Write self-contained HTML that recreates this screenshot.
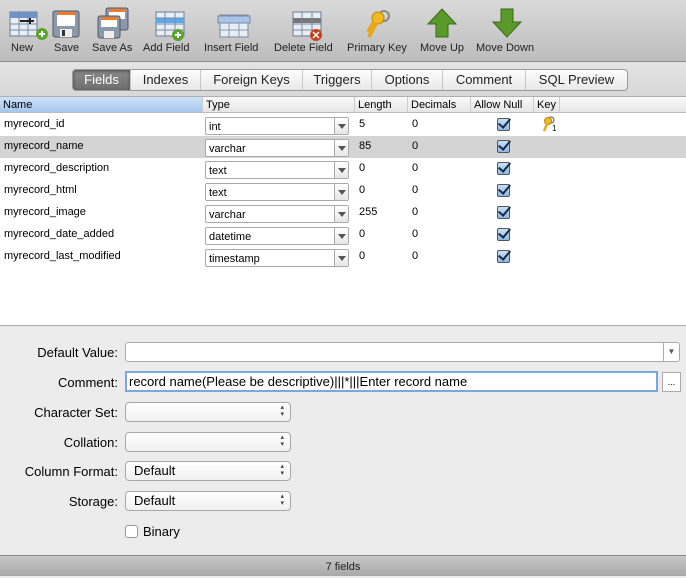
<!DOCTYPE html>
<html><head><style>
*{margin:0;padding:0;box-sizing:border-box}
body{width:686px;height:576px;overflow:hidden;font-family:"Liberation Sans",sans-serif;background:#ececec;position:relative;color:#000}
.abs{position:absolute}
#tb{left:0;top:0;width:686px;height:62px;background:linear-gradient(#dadada,#bdbdbd);border-bottom:1px solid #8a8a8a}
.tl{position:absolute;top:42px;font-size:11px;color:#222;white-space:nowrap}
#tabbar{left:0;top:62px;width:686px;height:35px;background:linear-gradient(#e4e4e4,#d8d8d8);border-bottom:1px solid #b0b0b0}
#seg{left:72px;top:69px;height:22px;width:556px;border:1px solid #9a9a9a;border-radius:4px;background:linear-gradient(#fdfdfd,#e8e8e8);display:flex;font-size:13px;overflow:hidden}
#seg div{height:20px;line-height:20px;text-align:center;border-right:1px solid #c8c8c8;color:#222}
#seg div.on{background:linear-gradient(#8a8a8a,#6e6e6e);color:#fff;box-shadow:inset 0 1px 3px #444}
#tbl{left:0;top:97px;width:686px;height:229px;background:#fff;border-bottom:1px solid #aaa}
.hd{position:absolute;top:0;height:16px;font-size:11px;line-height:16px;padding-left:3px;border-right:1px solid #ccc;background:linear-gradient(#fafafa,#e6e6e6);border-bottom:1px solid #bbb}
.row{position:absolute;left:0;width:686px;height:22px;font-size:11px}
.row span{position:absolute;top:4px}
.sel{position:absolute;left:205px;top:3px;width:144px;height:18px;border:1px solid #aaa;background:#fff;border-radius:2px}
.sel i{font-style:normal;position:absolute;left:3px;top:3px;font-size:11px}
.sel b{position:absolute;right:0;top:0;width:14px;height:16px;border-left:1px solid #aaa;background:linear-gradient(#fff,#e6e6e6)}
.sel b:after{content:"";position:absolute;left:3px;top:6px;border:4px solid transparent;border-top:5px solid #555}
.cb{position:absolute;left:497px;top:4px;width:13px;height:13px;border:1px solid #555;border-radius:2px;background:linear-gradient(#c8e0f8,#8cb8e8)}
.cb:after{content:"";position:absolute;left:3px;top:-3px;width:5px;height:10px;border:solid #1a2a44;border-width:0 2px 2px 0;transform:rotate(40deg)}
.lbl{position:absolute;right:568px;font-size:13px;text-align:right;white-space:nowrap}
.inp{position:absolute;background:#fff;border:1px solid #aaa}
.pop{position:absolute;left:125px;width:166px;height:20px;border:1px solid #a8a8a8;border-radius:4px;background:linear-gradient(#fff,#f0f0f0);font-size:13px;padding-left:8px;line-height:18px}
.pop:after{content:"▴\A▾";white-space:pre;position:absolute;right:6px;top:1px;font-size:7px;line-height:7px;color:#444}
#status{left:0;top:555px;width:686px;height:21px;background:linear-gradient(#c8c8c8,#a8a8a8);border-top:1px solid #888;font-size:11px;text-align:center;line-height:22px;color:#222}
</style></head><body>
<div id="tb" class="abs">
<svg class="abs" style="left:0;top:0" width="686" height="42">
<g transform="translate(10,12)"><rect width="27" height="24" fill="#e8eef6" stroke="#6a7a90"/><rect width="27" height="6" fill="#6f93c8"/><path d="M0 12H27M0 18H27M9 0V24M18 0V24" stroke="#7a8aa0"/><path d="M10 9H24M20 6V12" stroke="#222" stroke-width="2"/><circle cx="32" cy="22" r="6" fill="#5aa62a"/><path d="M29 22H35M32 19V25" stroke="#fff" stroke-width="2"/></g>
<g transform="translate(53,11)"><rect width="26" height="26" rx="2" fill="#8a9aaa" stroke="#556"/><rect x="4" y="1" width="18" height="14" fill="#fff"/><rect x="4" y="1" width="18" height="3" fill="#f07a2a"/><rect x="7" y="18" width="12" height="8" fill="#eee"/><rect x="9" y="19" width="3" height="6" fill="#333"/></g>
<g transform="translate(98,8)"><rect x="8" y="0" width="22" height="22" rx="2" fill="#8a9aaa" stroke="#556"/><rect x="11" y="1" width="16" height="10" fill="#fff"/><rect x="11" y="1" width="16" height="3" fill="#f07a2a"/><rect x="0" y="8" width="22" height="22" rx="2" fill="#8a9aaa" stroke="#556"/><rect x="3" y="9" width="16" height="10" fill="#fff"/><rect x="3" y="9" width="16" height="3" fill="#f07a2a"/><rect x="6" y="23" width="10" height="7" fill="#eee"/></g>
<g transform="translate(156,12)"><rect width="28" height="24" fill="#e8eef6" stroke="#6a7a90"/><rect y="6" width="28" height="5" fill="#5aaaf0"/><path d="M0 6H28M0 12H28M0 18H28M9 0V24M19 0V24" stroke="#7a8aa0"/><circle cx="22" cy="23" r="6" fill="#5aa62a"/><path d="M19 23H25M22 20V26" stroke="#fff" stroke-width="2"/></g>
<g transform="translate(218,12)"><rect x="2" y="3" width="28" height="22" fill="#e8eef6" stroke="#7a8aa0"/><path d="M2 11H30M2 18H30M11 3V25M21 3V25" stroke="#8a9ab0"/><rect x="0" y="4" width="32" height="7" fill="#a8c4e8" stroke="#7a8aa0"/></g>
<g transform="translate(293,12)"><rect width="28" height="24" fill="#e8eef6" stroke="#6a7a90"/><rect y="6" width="28" height="5" fill="#777"/><path d="M0 12H28M0 18H28M9 0V24M19 0V24" stroke="#7a8aa0"/><circle cx="23" cy="23" r="6" fill="#c8401a"/><path d="M20 20L26 26M26 20L20 26" stroke="#fff" stroke-width="1.5"/></g>
<g transform="translate(365,10)"><circle cx="19" cy="6" r="5" fill="none" stroke="#888" stroke-width="2"/><circle cx="13" cy="8" r="6" fill="#f4b820" stroke="#b8860b"/><path d="M11 13L4 27M9 12L3 22" stroke="#e8a818" stroke-width="4"/></g>
<g transform="translate(428,9)"><path d="M14 0L28 15H20V28H8V15H0Z" fill="#5a9a2a" stroke="#3a6a1a"/></g>
<g transform="translate(493,9)"><path d="M14 28L28 13H20V0H8V13H0Z" fill="#5a9a2a" stroke="#3a6a1a"/></g>
</svg>
<div class="tl" style="left:11px">New</div>
<div class="tl" style="left:54px">Save</div>
<div class="tl" style="left:92px">Save As</div>
<div class="tl" style="left:143px">Add Field</div>
<div class="tl" style="left:204px">Insert Field</div>
<div class="tl" style="left:274px">Delete Field</div>
<div class="tl" style="left:347px">Primary Key</div>
<div class="tl" style="left:420px">Move Up</div>
<div class="tl" style="left:476px">Move Down</div>
</div>
<div id="tabbar" class="abs"></div>
<div id="seg" class="abs">
<div class="on" style="width:58px">Fields</div><div style="width:70px">Indexes</div><div style="width:102px">Foreign Keys</div><div style="width:69px">Triggers</div><div style="width:71px">Options</div><div style="width:83px">Comment</div><div style="width:101px;border:none">SQL Preview</div>
</div>
<div id="tbl" class="abs">
<div class="hd" style="left:0;width:203px;background:linear-gradient(#cfe2f8,#a4c6ee)">Name</div>
<div class="hd" style="left:203px;width:152px">Type</div>
<div class="hd" style="left:355px;width:53px">Length</div>
<div class="hd" style="left:408px;width:63px">Decimals</div>
<div class="hd" style="left:471px;width:63px">Allow Null</div>
<div class="hd" style="left:534px;width:26px">Key</div>
<div class="hd" style="left:560px;width:126px;border-right:none"></div>
<div class="row" style="top:17px"><span style="left:4px">myrecord_id</span><div class="sel"><i>int</i><b></b></div><span style="left:359px">5</span><span style="left:412px">0</span><div class="cb"></div>
<svg style="position:absolute;left:541px;top:2px" width="16" height="16"><circle cx="10" cy="4" r="3" fill="none" stroke="#888" stroke-width="1.5"/><circle cx="7" cy="5" r="3.5" fill="#f4b820" stroke="#b8860b"/><path d="M6 8L3 15" stroke="#e8a818" stroke-width="2.5"/><text x="11" y="15" font-size="8" font-family="Liberation Sans">1</text></svg></div>
<div class="row" style="top:39px;background:#d4d4d4"><span style="left:4px">myrecord_name</span><div class="sel"><i>varchar</i><b></b></div><span style="left:359px">85</span><span style="left:412px">0</span><div class="cb"></div></div>
<div class="row" style="top:61px"><span style="left:4px">myrecord_description</span><div class="sel"><i>text</i><b></b></div><span style="left:359px">0</span><span style="left:412px">0</span><div class="cb"></div></div>
<div class="row" style="top:83px"><span style="left:4px">myrecord_html</span><div class="sel"><i>text</i><b></b></div><span style="left:359px">0</span><span style="left:412px">0</span><div class="cb"></div></div>
<div class="row" style="top:105px"><span style="left:4px">myrecord_image</span><div class="sel"><i>varchar</i><b></b></div><span style="left:359px">255</span><span style="left:412px">0</span><div class="cb"></div></div>
<div class="row" style="top:127px"><span style="left:4px">myrecord_date_added</span><div class="sel"><i>datetime</i><b></b></div><span style="left:359px">0</span><span style="left:412px">0</span><div class="cb"></div></div>
<div class="row" style="top:149px"><span style="left:4px">myrecord_last_modified</span><div class="sel"><i>timestamp</i><b></b></div><span style="left:359px">0</span><span style="left:412px">0</span><div class="cb"></div></div>
</div>
<div class="lbl" style="top:345px">Default Value:</div>
<div class="inp" style="left:125px;top:342px;width:555px;height:20px;border-radius:3px"><div style="position:absolute;right:0;top:0;width:16px;height:18px;border-left:1px solid #aaa;font-size:8px;text-align:center;line-height:18px;color:#555">▼</div></div>
<div class="lbl" style="top:375px">Comment:</div>
<div class="inp" style="left:125px;top:371px;width:533px;height:21px;border:2px solid #7ba7dc;font-size:13px;padding-left:2px;line-height:17px">record name(Please be descriptive)|||*|||Enter record name</div>
<div class="inp" style="left:662px;top:372px;width:19px;height:20px;font-size:9px;text-align:center;line-height:18px">...</div>
<div class="lbl" style="top:405px">Character Set:</div><div class="pop" style="top:402px"></div>
<div class="lbl" style="top:435px">Collation:</div><div class="pop" style="top:432px"></div>
<div class="lbl" style="top:464px">Column Format:</div><div class="pop" style="top:461px">Default</div>
<div class="lbl" style="top:494px">Storage:</div><div class="pop" style="top:491px">Default</div>
<div class="abs" style="left:125px;top:525px;width:13px;height:13px;border:1px solid #999;border-radius:3px;background:#fff"></div>
<div class="abs" style="left:143px;top:524px;font-size:13px">Binary</div>
<div id="status" class="abs">7 fields</div>
</body></html>
